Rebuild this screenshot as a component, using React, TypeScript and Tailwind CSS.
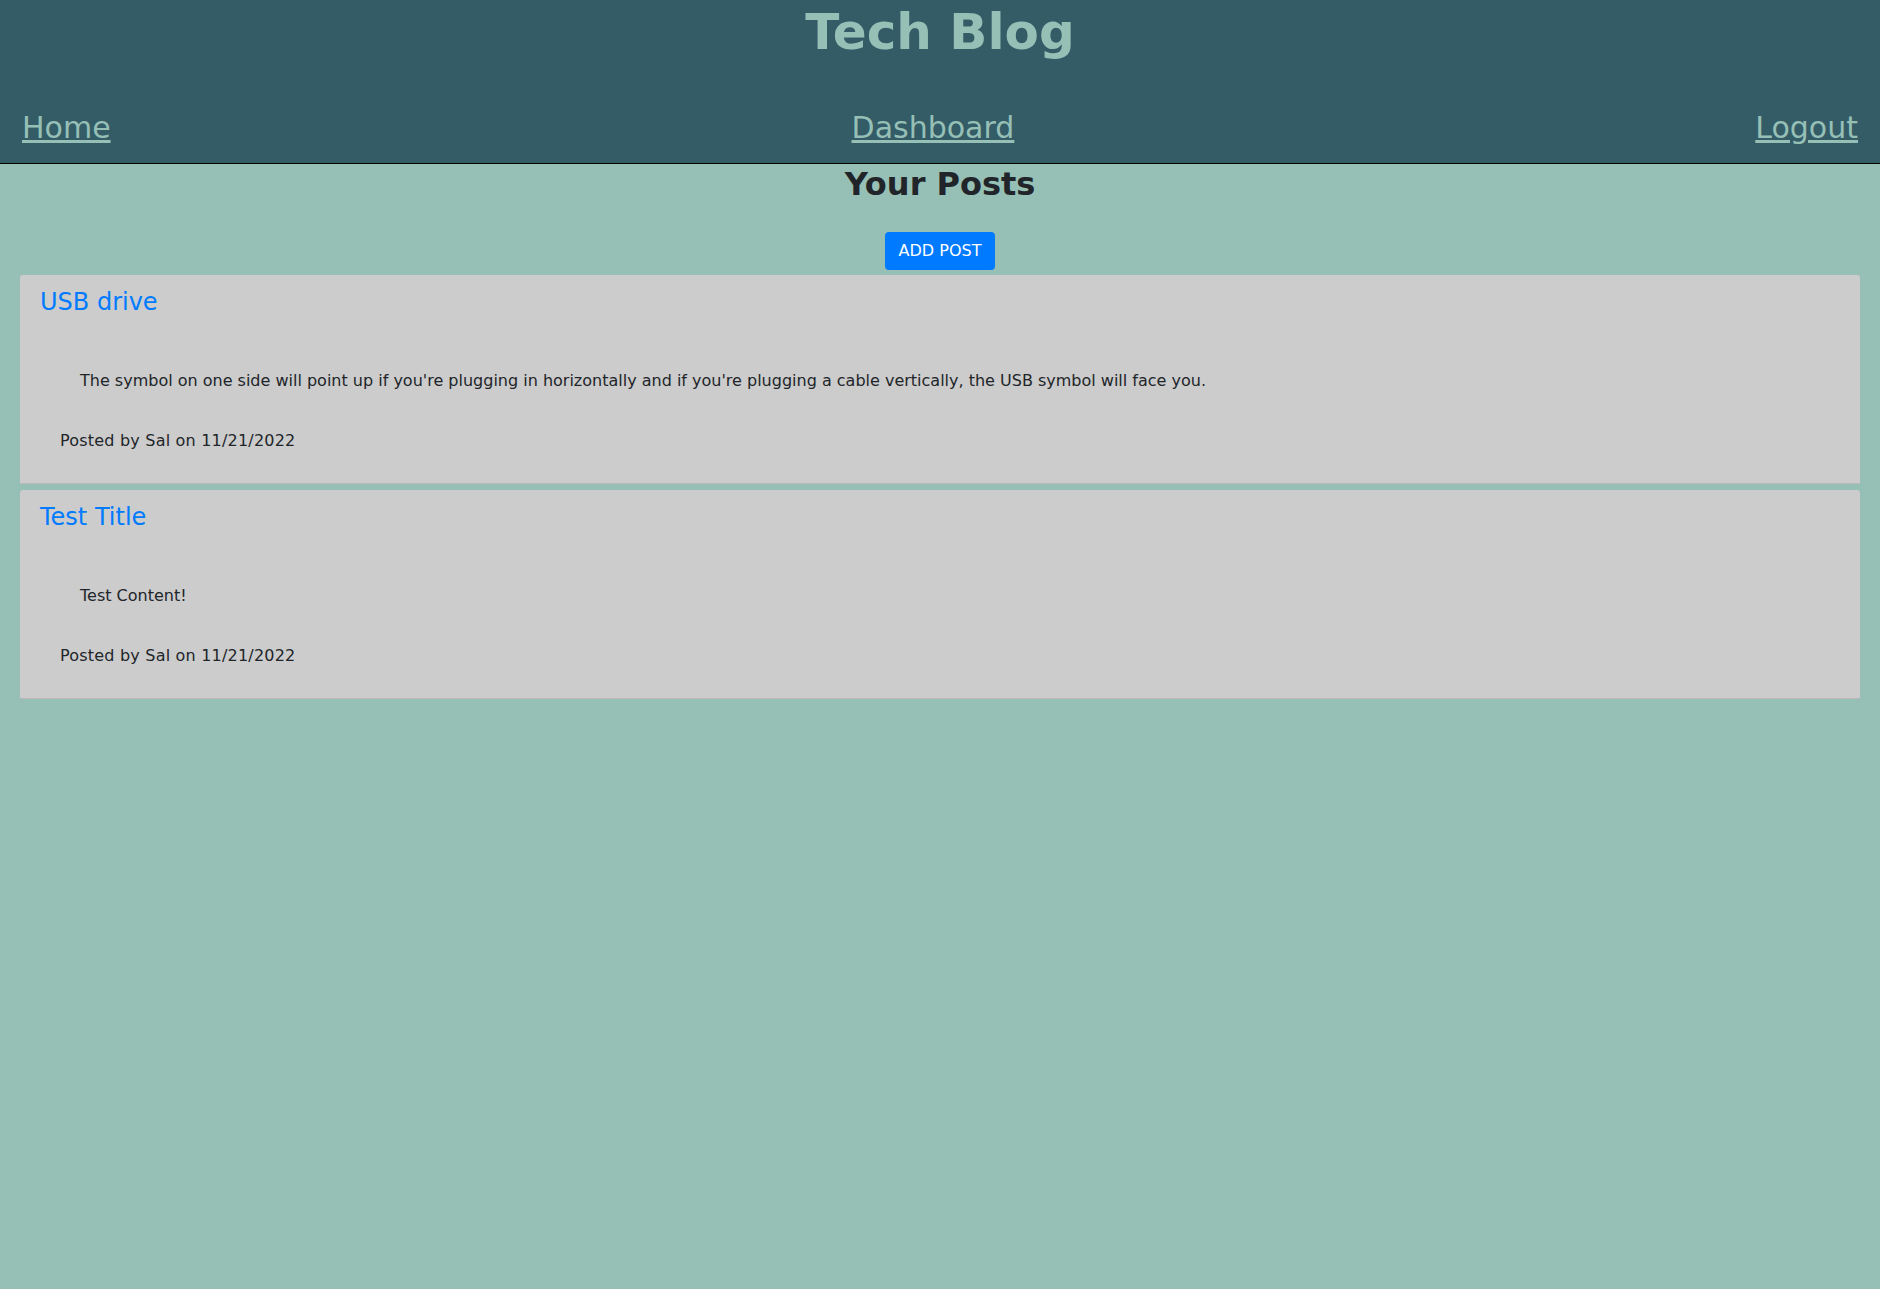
import React from 'react';

const posts = [
  {
    id: 1,
    title: 'USB drive',
    content:
      "The symbol on one side will point up if you're plugging in horizontally and if you're plugging a cable vertically, the USB symbol will face you.",
    author: 'Sal',
    date: '11/21/2022',
  },
  {
    id: 2,
    title: 'Test Title',
    content: 'Test Content!',
    author: 'Sal',
    date: '11/21/2022',
  },
];

function Header() {
  return (
    <header className="bg-[#335c67] border-b border-black pt-[2px] pb-[17px]">
      <h1 className="text-center text-[50px] leading-[60px] font-bold text-[#96bfb6]">Tech Blog</h1>
      <nav className="mt-[48px] flex justify-between px-[22px] text-[30px] leading-[36px]">
        <a href="#" className="underline text-[#96bfb6]">Home</a>
        <a href="#" className="underline text-[#96bfb6]">Dashboard</a>
        <a href="#" className="underline text-[#96bfb6]">Logout</a>
      </nav>
    </header>
  );
}

export default function App() {
  return (
    <div className="min-h-screen bg-[#96bfb6] font-['DejaVu_Sans',Verdana,sans-serif] text-[#212529]">
      <Header />
      <main>
        <h2 className="pt-[1px] text-center text-[32px] leading-[38.4px] font-bold">Your Posts</h2>
        <div className="mt-[29px] flex justify-center">
          <button className="h-[38px] w-[110px] rounded bg-[#007bff] text-white text-base">ADD POST</button>
        </div>
        <div className="mt-[5px] px-5 flex flex-col gap-[6px]">
          {posts.map((post) => (
            <div key={post.id} className="h-[209px] bg-[#cccccc] rounded-t-[3px] border-b border-[#bdb8b8]">
              <div className="pt-[13px] px-5">
                <h4 className="text-2xl leading-[28.8px] text-[#007bff]">{post.title}</h4>
              </div>
              <p className="mt-[52px] pl-[60px] text-base leading-6">{post.content}</p>
              <p className="mt-[36px] pl-10 text-base leading-6 tracking-[0.2px]">
                Posted by {post.author} on {post.date}
              </p>
            </div>
          ))}
        </div>
      </main>
    </div>
  );
}
